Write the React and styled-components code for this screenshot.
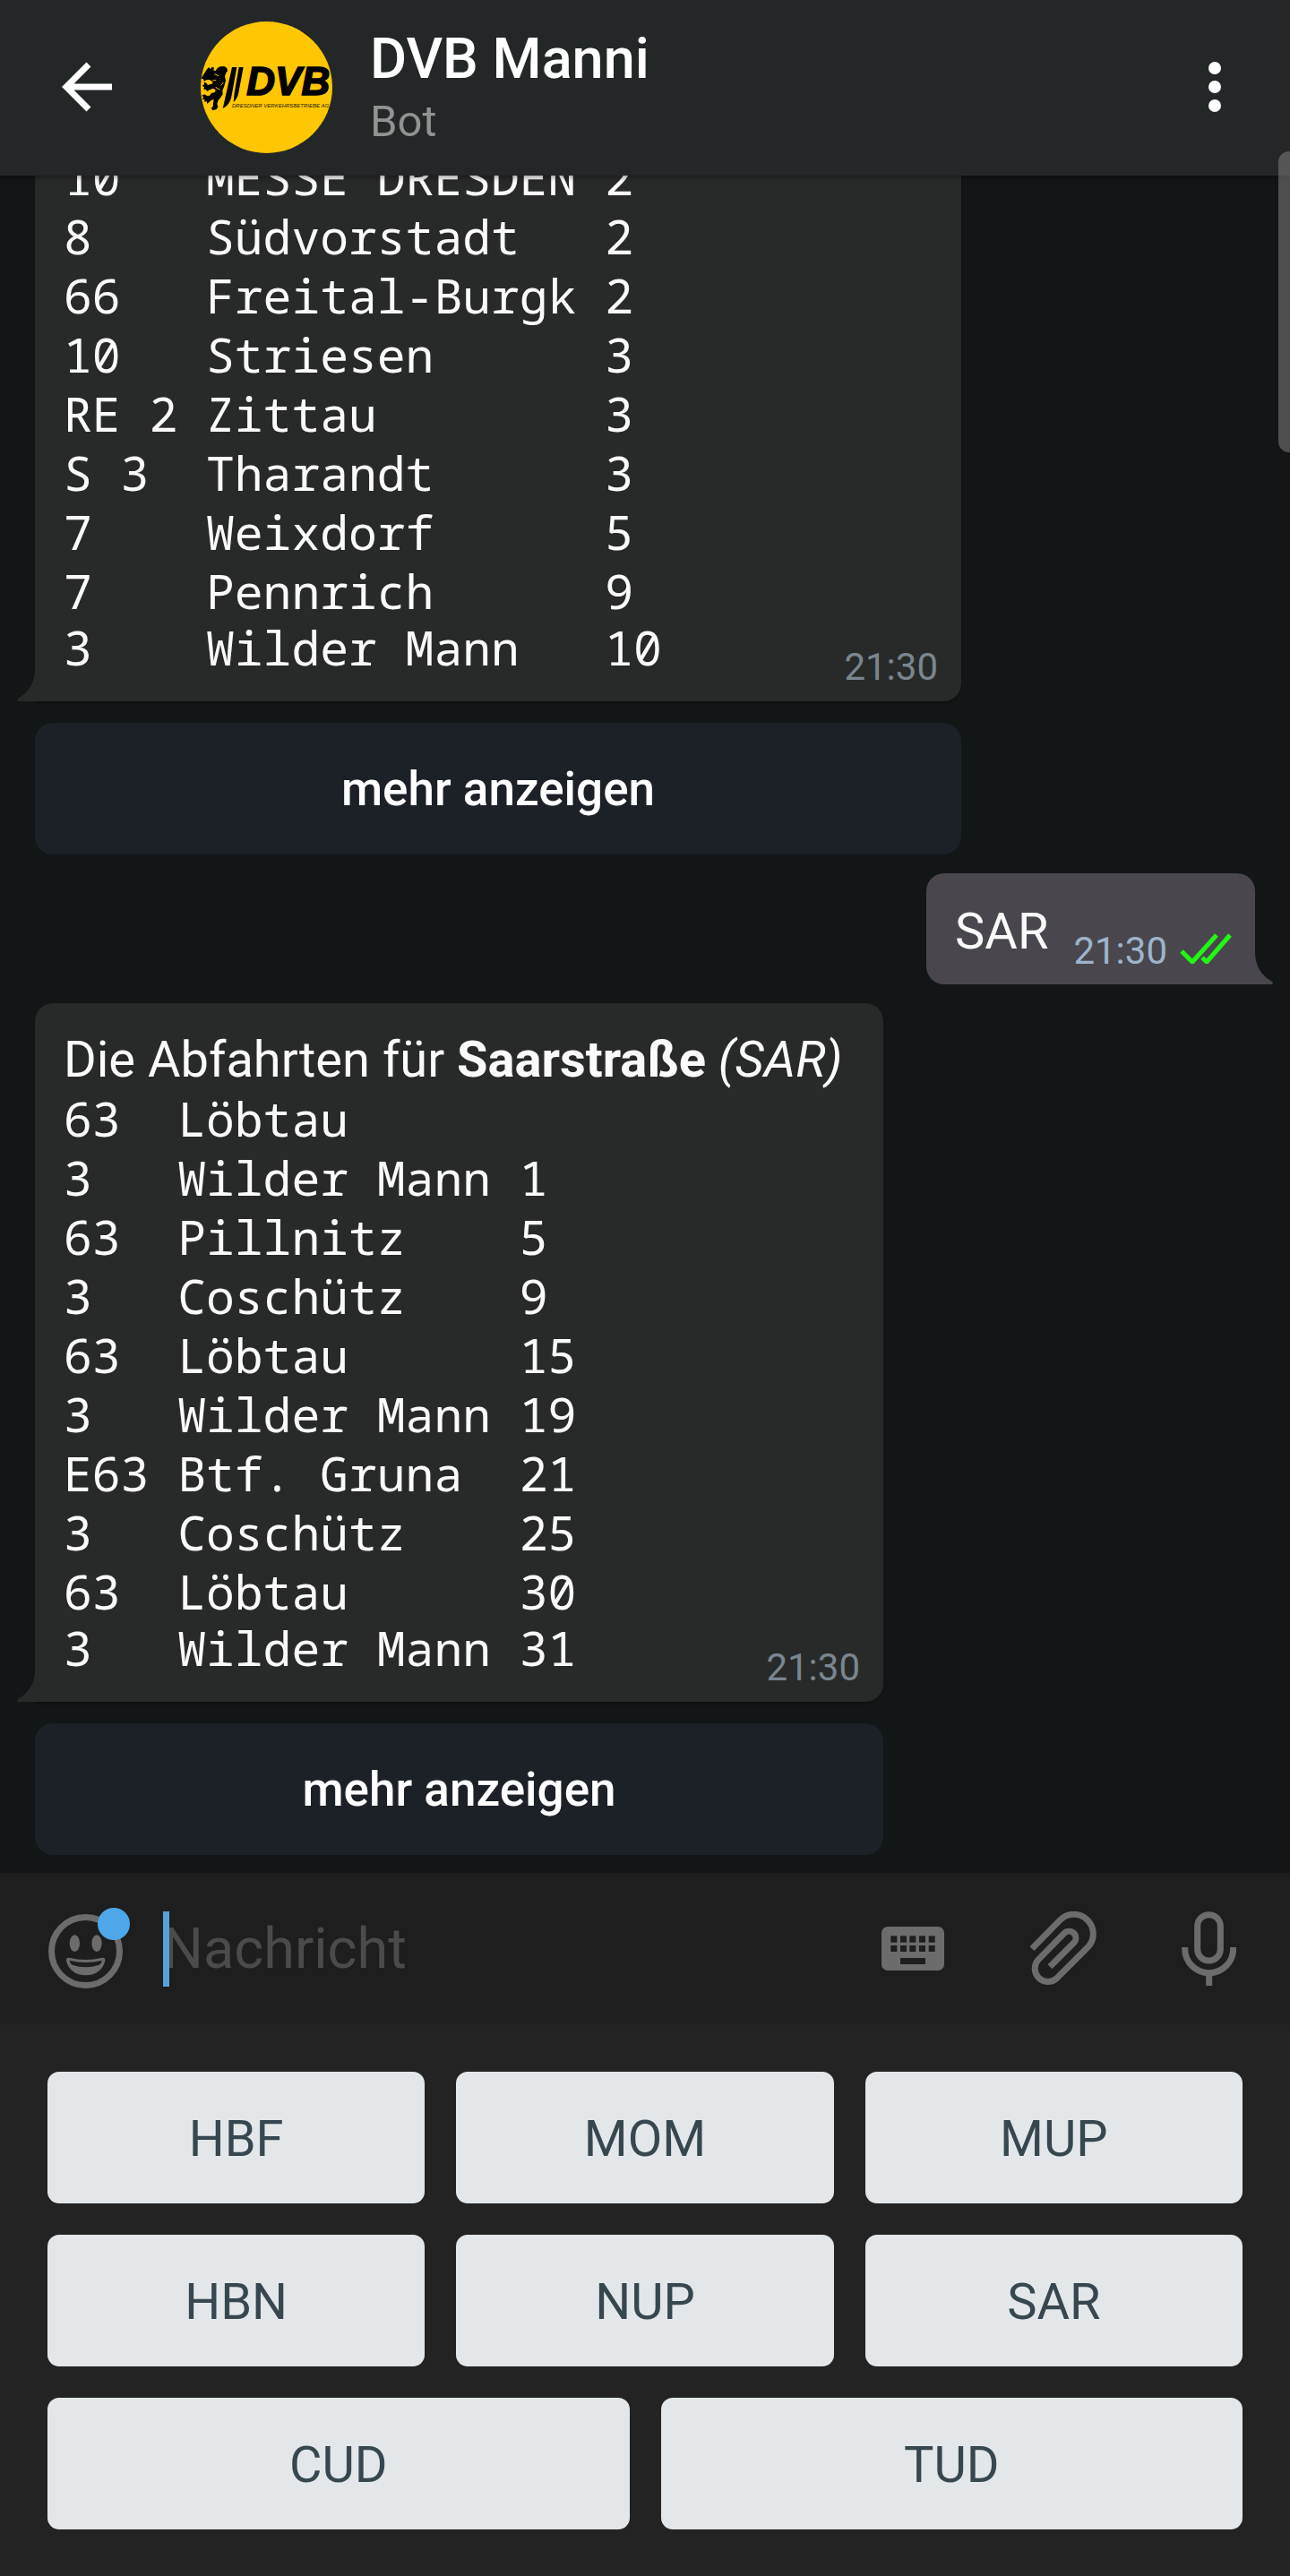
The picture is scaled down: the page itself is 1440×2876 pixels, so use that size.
import React from "react";
import styled, { createGlobalStyle } from "styled-components";

const GlobalStyle = createGlobalStyle`
  * { box-sizing: border-box; }
  body {
    margin: 0;
    background: #121617;
    font-family: Roboto, "Liberation Sans", sans-serif;
    color: #fafafa;
  }
  button, input {
    margin: 0;
    padding: 0;
    border: 0;
    background: none;
    font: inherit;
    color: inherit;
  }
  svg { display: block; }
`;

const Screen = styled.div`
  position: relative;
  display: flex;
  flex-direction: column;
  height: 100vh;
  overflow: hidden;
`;

const Header = styled.header`
  display: flex;
  align-items: center;
  flex: none;
  height: 196px;
  padding: 0 76px 2px 68px;
  background: #232728;
  box-shadow: 0 2px 6px rgba(0, 0, 0, 0.4);
  z-index: 1;
`;

const IconButton = styled.button`
  flex: none;
  display: flex;
  color: ${(p) => p.$color || "#6c6c6c"};
`;

const Avatar = styled.div`
  flex: none;
  width: 147px;
  height: 147px;
  margin: 0 42px 0 99px;
  border-radius: 50%;
  overflow: hidden;
`;

const Identity = styled.div`
  flex: 1;
  min-width: 0;
  padding-top: 6px;
`;

const Title = styled.h1`
  margin: 0;
  font-size: 63px;
  line-height: 72px;
  font-weight: 500;
  color: #ffffff;
`;

const Subtitle = styled.div`
  font-size: 49px;
  line-height: 68px;
  color: #929292;
`;

const Chat = styled.main`
  flex: 1;
  min-height: 0;
  display: flex;
  flex-direction: column;
  justify-content: flex-end;
  gap: 21px;
  padding: 0 39px 20px;
  overflow: hidden;
`;

const Group = styled.section`
  flex: none;
  display: flex;
  flex-direction: column;
  gap: 24px;
  width: ${(p) => p.$width}px;
  max-width: 100%;
`;

const Bubble = styled.div`
  position: relative;
  padding: 30px 32px 30px;
  background: #282a29;
  border-radius: 20px 20px 20px 0;
  box-shadow: 0 2px 3px rgba(0, 0, 0, 0.3);
`;

const Heading = styled.p`
  margin: 0;
  font-size: 56px;
  line-height: 66px;
  white-space: nowrap;

  strong { font-weight: 700; }
`;

const Departures = styled.table`
  border-collapse: collapse;
  font-family: "Noto Sans Mono", "Droid Sans Mono", "DejaVu Sans Mono", monospace;
  font-size: 53px;

  td {
    height: 66px;
    padding: 0 1ch 0 0;
    line-height: 66px;
    white-space: nowrap;
  }
  tr:last-child td {
    height: 60px;
    line-height: 60px;
  }
`;

const Time = styled.time`
  font-size: 42px;
  line-height: 48px;
  color: ${(p) => p.$color};
`;

const Stamp = styled.div`
  position: absolute;
  right: 26px;
  bottom: 14px;
`;

const Tail = styled.svg`
  position: absolute;
  bottom: 0;
  ${(p) => (p.$side === "left" ? "right: 100%;" : "left: 100%;")}
`;

const InlineKey = styled.button`
  height: 147px;
  border-radius: 20px;
  background: #1c2027;
  font-size: 53px;
  font-weight: 500;
  color: #ffffff;
`;

const OwnBubble = styled.div`
  position: relative;
  flex: none;
  align-self: flex-end;
  display: flex;
  align-items: flex-end;
  height: 124px;
  padding: 0 26px 13px 32px;
  border-radius: 20px 20px 0 20px;
  background: #49474d;
`;

const OwnText = styled.span`
  padding: 0 28px 13px 0;
  font-size: 56px;
  line-height: 66px;
`;

const Ticks = styled.svg`
  margin: 0 0 10px 14px;
`;

const Composer = styled.form`
  flex: none;
  display: flex;
  align-items: center;
  height: 169px;
  padding: 0 60px 0 54px;
  background: #1e1e1e;
`;

const EmojiWrap = styled.div`
  position: relative;
  flex: none;
  margin: 5px 45px 0 0;
`;

const Dot = styled.span`
  position: absolute;
  top: -7px;
  right: -8px;
  width: 36px;
  height: 36px;
  border-radius: 50%;
  background: #4fa6e9;
`;

const Field = styled.label`
  position: relative;
  flex: 1;
  min-width: 0;
  display: flex;
  align-items: center;
  height: 84px;
`;

const Caret = styled.span`
  position: absolute;
  left: 0;
  top: 0;
  bottom: 0;
  width: 7px;
  background: #58a1d8;
`;

const MessageInput = styled.input`
  width: 100%;
  height: 84px;
  font-size: 63px;
  outline: none;

  &::placeholder {
    color: #4b4b4b;
    opacity: 1;
  }
`;

const Tools = styled.div`
  display: flex;
  align-items: center;
  gap: 95px;
`;

const Keyboard = styled.div`
  flex: none;
  display: grid;
  gap: 35px;
  padding: 53px 53px 52px;
  background: #232323;
`;

const KeyRow = styled.div`
  display: flex;
  gap: 35px;
`;

const Key = styled.button`
  flex: 1;
  height: 147px;
  padding-top: 3px;
  border-radius: 13px;
  background: #e3e7ea;
  font-size: 56px;
  color: #37474f;
`;

const ScrollThumb = styled.div`
  position: absolute;
  top: 169px;
  right: 0;
  width: 13px;
  height: 336px;
  border-radius: 12px 0 0 12px;
  background: rgba(134, 136, 137, 0.5);
  z-index: 2;
`;

const hbfRows = [
  ["10", "MESSE DRESDEN", "2"],
  ["8", "Südvorstadt", "2"],
  ["66", "Freital-Burgk", "2"],
  ["10", "Striesen", "3"],
  ["RE 2", "Zittau", "3"],
  ["S 3", "Tharandt", "3"],
  ["7", "Weixdorf", "5"],
  ["7", "Pennrich", "9"],
  ["3", "Wilder Mann", "10"],
];

const sarRows = [
  ["63", "Löbtau", ""],
  ["3", "Wilder Mann", "1"],
  ["63", "Pillnitz", "5"],
  ["3", "Coschütz", "9"],
  ["63", "Löbtau", "15"],
  ["3", "Wilder Mann", "19"],
  ["E63", "Btf. Gruna", "21"],
  ["3", "Coschütz", "25"],
  ["63", "Löbtau", "30"],
  ["3", "Wilder Mann", "31"],
];

const keys = [["HBF", "MOM", "MUP"], ["HBN", "NUP", "SAR"], ["CUD", "TUD"]];

function Logo() {
  return (
    <svg width="147" height="147" viewBox="72 42 441 441" role="img" aria-label="DVB">
      <rect x="72" y="42" width="441" height="441" fill="#ffc604" />
      <path d="M92 203l7-8 6 6 5-7 7 3-2 9 8 1 4-8 10-6 14-1 9 6 2 10-5 6-4 12 3 14-5 18-6 16 1 12-7 10-8 10-4 12 3 10-5 8-12 4-6-7 6-6 1-12 2-12-8 2-8 8-7 4 0-7-8 1 0-8-8 0 5-7-6-6 9-4 9 5 8-1 6-8 12-3 2-8-8-5-12 5-9 5-3-7-8 1 2-8-7-5 7-4-1-8 8 3 5 7 9-3 8-2-3-8-9-5-10 1-7 5-2-7-8-4z" fill="#000" />
      <path d="M118 218l14 6M122 262l14 8M112 240l12-2M140 256l8-10" stroke="#ffc604" strokeWidth="3" fill="none" />
      <path d="M177 195h16l-17 94q-6 34-30 44l7-30z" fill="#000" />
      <path d="M200 195h15l-15 80q-5 28-18 36l3-30z" fill="#000" />
      <text x="226" y="288" fill="#000" stroke="#000" strokeWidth="5" fontFamily="Liberation Sans, sans-serif" fontSize="132" fontWeight="700" fontStyle="italic">DVB</text>
      <text x="177" y="329" fill="#2a2204" fontFamily="Liberation Sans, sans-serif" fontSize="18" fontStyle="italic">DRESDNER VERKEHRSBETRIEBE AG</text>
    </svg>
  );
}

function LeftTail() {
  return (
    <Tail $side="left" width="20" height="36" viewBox="0 0 20 36" aria-hidden="true">
      <path d="M20 0Q20 22 1 33Q-1 36 2 36H20z" fill="#282a29" />
    </Tail>
  );
}

function DepartureTable({ rows, label }) {
  return (
    <Departures aria-label={label}>
      <tbody>
        {rows.map((row, i) => (
          <tr key={i}>
            {row.map((cell, j) => (
              <td key={j}>{cell}</td>
            ))}
          </tr>
        ))}
      </tbody>
    </Departures>
  );
}

function BotMessage({ width, heading, rows, label }) {
  return (
    <Group $width={width}>
      <Bubble>
        {heading}
        <DepartureTable rows={rows} label={label} />
        <Stamp>
          <Time $color="#7a8690">21:30</Time>
        </Stamp>
        <LeftTail />
      </Bubble>
      <InlineKey type="button">mehr anzeigen</InlineKey>
    </Group>
  );
}

function EmojiIcon() {
  return (
    <svg width="83" height="83" viewBox="162 201 249 249" fill="currentColor">
      <circle cx="286.500" cy="325.500" r="114" fill="none" stroke="currentColor" strokeWidth="21" />
      <ellipse cx="250" cy="299" rx="17" ry="28" />
      <ellipse cx="324" cy="299" rx="17" ry="28" />
      <path fillRule="evenodd" d="M232 347Q287 361 342 347Q353 346 352 357C345 388 320 406 287 406S229 388 222 357Q221 346 232 347ZM232 356Q234 365 242 371Q287 386 332 371Q340 365 342 356Q287 370 232 356Z" />
    </svg>
  );
}

function KeyboardIcon() {
  return (
    <svg width="70" height="49" viewBox="0 0 210 147">
      <rect width="210" height="147" rx="21" fill="currentColor" />
      <g fill="#1e1e1e">
        {[31, 63, 94, 126, 158].map((x) => (
          <React.Fragment key={x}>
            <rect x={x} y="31" width="21" height="22" />
            <rect x={x} y="63" width="21" height="21" />
          </React.Fragment>
        ))}
        <rect x="63" y="105" width="84" height="21" />
      </g>
    </svg>
  );
}

function ClipIcon() {
  return (
    <svg width="75" height="83" viewBox="631 195 225 249" fill="none" stroke="currentColor" strokeWidth="21">
      <path d="M640 320L734 224A65 65 0 0 1 826 316L722 420A44 44 0 0 1 660 358L748 268A22 22 0 0 1 780 300L700 380" />
    </svg>
  );
}

function MicIcon() {
  return (
    <svg width="61" height="83" viewBox="1137 195 183 249" fill="none" stroke="currentColor" strokeWidth="21">
      <rect x="1190" y="206" width="77" height="154" rx="38" />
      <path d="M1148 315v5a81 81 0 0 0 162 0v-5M1229 401v43" />
    </svg>
  );
}

export default function App() {
  return (
    <Screen>
      <GlobalStyle />
      <Header>
        <IconButton type="button" aria-label="Zurück" $color="#ffffff">
          <svg width="57" height="56" viewBox="0 0 57 56" fill="none" stroke="currentColor" strokeWidth="7">
            <path d="M57 28H6M31 3L6 28L31 53" />
          </svg>
        </IconButton>
        <Avatar>
          <Logo />
        </Avatar>
        <Identity>
          <Title>DVB Manni</Title>
          <Subtitle>Bot</Subtitle>
        </Identity>
        <IconButton type="button" aria-label="Menü" $color="#ffffff">
          <svg width="16" height="58" viewBox="0 0 16 58" fill="currentColor">
            <circle cx="8" cy="8" r="7" />
            <circle cx="8" cy="29" r="7" />
            <circle cx="8" cy="50" r="7" />
          </svg>
        </IconButton>
      </Header>

      <Chat>
        <BotMessage width={1034} rows={hbfRows} label="Abfahrten" />
        <OwnBubble>
          <OwnText>SAR</OwnText>
          <Time $color="#9db4cc">21:30</Time>
          <Ticks width="58" height="34" viewBox="0 0 58 34" fill="none" stroke="#21f715" strokeWidth="5" aria-label="Gelesen">
            <path d="M2 20L14 32L41 2M25 27L30 32L56 2" />
          </Ticks>
          <Tail $side="right" width="20" height="36" viewBox="0 0 20 36" aria-hidden="true">
            <path d="M0 0Q0 22 19 33Q21 36 18 36H0z" fill="#49474d" />
          </Tail>
        </OwnBubble>
        <BotMessage
          width={947}
          rows={sarRows}
          label="Abfahrten Saarstraße"
          heading={
            <Heading>
              Die Abfahrten für <strong>Saarstraße</strong> <em>(SAR)</em>
            </Heading>
          }
        />
      </Chat>

      <Composer onSubmit={(e) => e.preventDefault()}>
        <EmojiWrap>
          <IconButton type="button" aria-label="Emoji">
            <EmojiIcon />
          </IconButton>
          <Dot />
        </EmojiWrap>
        <Field>
          <MessageInput type="text" placeholder="Nachricht" aria-label="Nachricht" />
          <Caret />
        </Field>
        <Tools>
          <IconButton type="button" aria-label="Tastatur">
            <KeyboardIcon />
          </IconButton>
          <IconButton type="button" aria-label="Anhang">
            <ClipIcon />
          </IconButton>
          <IconButton type="button" aria-label="Sprachnachricht">
            <MicIcon />
          </IconButton>
        </Tools>
      </Composer>

      <Keyboard>
        {keys.map((row, i) => (
          <KeyRow key={i}>
            {row.map((k) => (
              <Key type="button" key={k}>{k}</Key>
            ))}
          </KeyRow>
        ))}
      </Keyboard>
      <ScrollThumb />
    </Screen>
  );
}
